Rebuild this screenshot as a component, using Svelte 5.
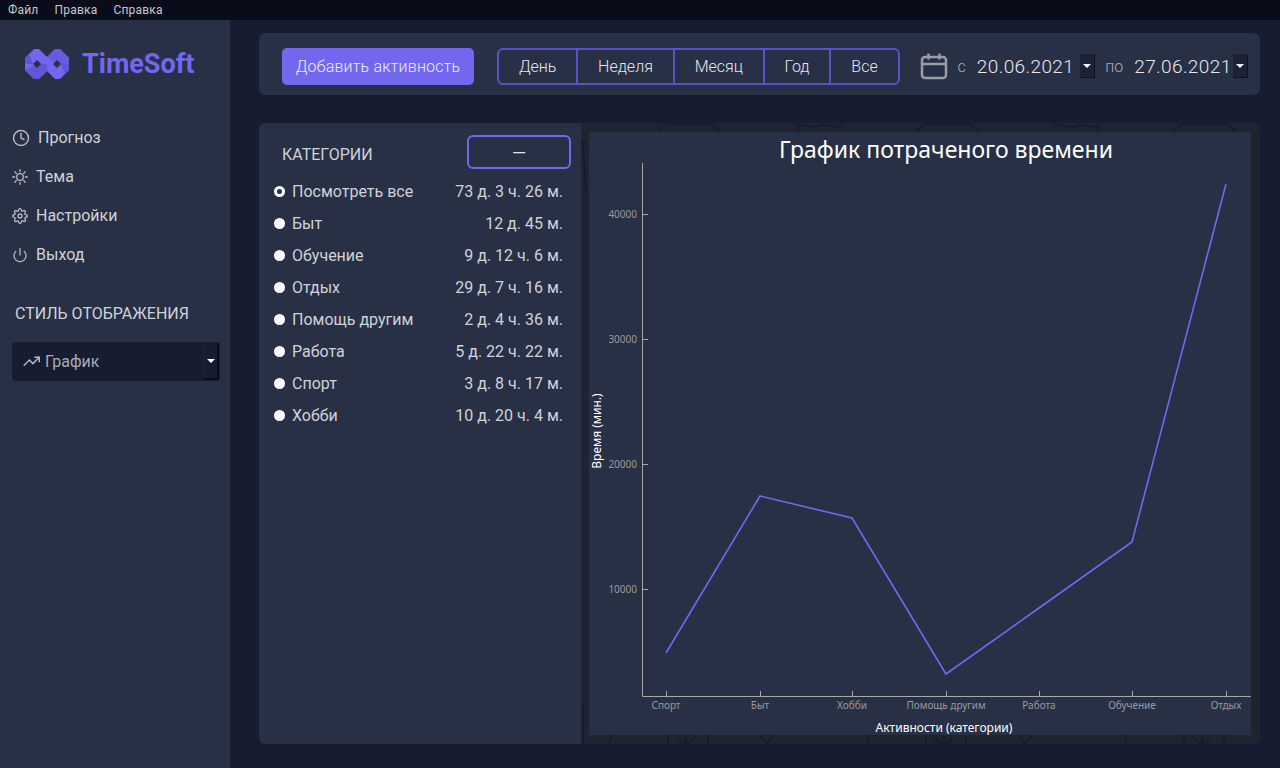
<script>
  const menus = ['Файл', 'Правка', 'Справка']
  const ranges = ['День', 'Неделя', 'Месяц', 'Год', 'Все']
  const categories = [
    { name: 'Посмотреть все', time: '73 д. 3 ч. 26 м.', active: true },
    { name: 'Быт', time: '12 д. 45 м.' },
    { name: 'Обучение', time: '9 д. 12 ч. 6 м.' },
    { name: 'Отдых', time: '29 д. 7 ч. 16 м.' },
    { name: 'Помощь другим', time: '2 д. 4 ч. 36 м.' },
    { name: 'Работа', time: '5 д. 22 ч. 22 м.' },
    { name: 'Спорт', time: '3 д. 8 ч. 17 м.' },
    { name: 'Хобби', time: '10 д. 20 ч. 4 м.' }
  ]
  // chart points, in px inside the plot svg
  const points = [
    { x: 77, y: 521, label: 'Спорт' },
    { x: 171, y: 364, label: 'Быт' },
    { x: 263, y: 386, label: 'Хобби' },
    { x: 357, y: 542, label: 'Помощь другим' },
    { x: 450, y: 476, label: 'Работа' },
    { x: 543, y: 410, label: 'Обучение' },
    { x: 637, y: 52, label: 'Отдых' }
  ]
  const yTicks = [
    { y: 82, label: '40000' },
    { y: 207, label: '30000' },
    { y: 332, label: '20000' },
    { y: 457, label: '10000' }
  ]
  const line = points.map((p) => `${p.x},${p.y}`).join(' ')
  // faint doodle wallpaper behind the chart repeats every 258px
  const repeats = [0, 258, 516]
</script>

<div class="app">
  <nav class="menubar">
    {#each menus as m}<span>{m}</span>{/each}
  </nav>

  <div class="body">
    <aside class="sidebar">
      <div class="logo">
        <svg width="46" height="32" viewBox="0 0 46 32">
          <path d="M1 10 L10 1 L15 1 L23 9 L31 1 L36 1 L45 10 L45 22 L36 31 L31 31 L23 23 L15 31 L10 31 L1 22 Z" fill="#7367f0" />
          <path d="M1 22 L10 31 L15 31 L23 23 L23 16 L13 16 Z" fill="#5f55d6" />
          <path d="M31 1 L36 1 L45 10 L45 16 L33 16 L23 9 Z" fill="#675cdf" />
          <path d="M1 10 L5 6 L9 16 L1 16 Z M45 22 L41 26 L37 16 L45 16 Z" fill="#5f55d6" />
          <path d="M13 12 L17 16 L13 20 L9 16 Z M33 12 L37 16 L33 20 L29 16 Z" fill="#283046" />
        </svg>
        <span>TimeSoft</span>
      </div>

      <ul class="nav">
        <li>
          <svg width="18" height="18" viewBox="0 0 24 24"><circle cx="12" cy="12" r="10" /><path d="M12 6v6l4 2" /></svg>
          Прогноз
        </li>
        <li>
          <svg width="16" height="16" viewBox="0 0 24 24"><circle cx="12" cy="12" r="5" /><path d="M12 1v3M12 20v3M4.200 4.200l2.100 2.100M17.700 17.700l2.100 2.100M1 12h3M20 12h3M4.200 19.800l2.100-2.100M17.700 6.300l2.100-2.100" /></svg>
          Тема
        </li>
        <li>
          <svg width="16" height="16" viewBox="0 0 24 24"><circle cx="12" cy="12" r="3" /><path d="M19.400 15a1.650 1.650 0 0 0 .33 1.820l.06.06a2 2 0 1 1-2.830 2.830l-.06-.06a1.650 1.650 0 0 0-2.820 1.170V21a2 2 0 1 1-4 0v-.09A1.650 1.650 0 0 0 7.200 19.800l-.06.06a2 2 0 1 1-2.830-2.830l.06-.06a1.650 1.650 0 0 0-1.170-2.820H3a2 2 0 1 1 0-4h.09A1.650 1.650 0 0 0 4.200 7.200l-.06-.06a2 2 0 1 1 2.830-2.830l.06.06a1.650 1.650 0 0 0 2.820-1.170V3a2 2 0 1 1 4 0v.09a1.650 1.650 0 0 0 2.820 1.170l.06-.06a2 2 0 1 1 2.830 2.830l-.06.06a1.650 1.650 0 0 0 1.170 2.820H21a2 2 0 1 1 0 4h-.09a1.650 1.650 0 0 0-1.510 1z" /></svg>
          Настройки
        </li>
        <li>
          <svg width="16" height="16" viewBox="0 0 24 24"><path d="M18.400 6.600a9 9 0 1 1-12.770 0M12 2v10" /></svg>
          Выход
        </li>
      </ul>

      <div class="style-title">СТИЛЬ ОТОБРАЖЕНИЯ</div>
      <div class="select">
        <svg width="17" height="17" viewBox="0 0 24 24"><path d="M1 18l8-8 5 5 9-9M16 6h7v7" /></svg>
        <span>График</span>
        <div class="caret-box"><i class="caret"></i></div>
      </div>
    </aside>

    <main class="main">
      <section class="toolbar">
        <button class="add">Добавить активность</button>
        <div class="ranges">
          {#each ranges as r}<button>{r}</button>{/each}
        </div>
        <div class="dates">
          <svg class="cal" width="28" height="28" viewBox="0 0 28 28"><rect x="2" y="5" width="24" height="21" rx="3" /><path d="M2 12h24M8.500 1.500v6M19.500 1.500v6" /></svg>
          <span class="word from">с</span>
          <span class="date">20.06.2021</span>
          <div class="spin"><i class="caret"></i></div>
          <span class="word">по</span>
          <span class="date">27.06.2021</span>
          <div class="spin tight"><i class="caret"></i></div>
        </div>
      </section>

      <section class="content">
        <div class="cats">
          <div class="cats-head">
            <span>КАТЕГОРИИ</span>
            <button class="collapse">—</button>
          </div>
          {#each categories as c}
            <div class="cat">
              <i class="dot" class:active={c.active}></i>
              <span class="name">{c.name}</span>
              <span class="time">{c.time}</span>
            </div>
          {/each}
        </div>

        <div class="chart-wrap">
          <svg class="doodles" width="679" height="621" viewBox="0 0 679 621">
            {#each repeats as dx}
              <g transform="translate({dx} 0)">
                <path d="M76 9 L86 1 H130 L140 9" />
                <path d="M217 0 V9 M259 0 V9 M217 3 Q222 1 227 3 T238 3 T249 3 T259 3" />
                <path d="M30 612 L28 621 M87 612 V621 M127 612 V621 M105 612 V621 M95 612 Q100 621 105 621 Q110 621 115 612 M179 612 L186 621 M193 612 L186 621" />
              </g>
            {/each}
            <path d="M0 20 H6 M2 20 L5 70 M2 580 V621" />
          </svg>
          <div class="chart">
            <svg width="662" height="603" viewBox="0 0 662 603">
              <text class="title" x="357" y="26" text-anchor="middle">График потраченого времени</text>
              <path class="axis" d="M53.500 31V564.500H662" />
              {#each yTicks as t}
                <path class="tick" d="M53 {t.y + 0.5}h6" />
                <text class="tick-label" x="48" y={t.y + 4} text-anchor="end">{t.label}</text>
              {/each}
              {#each points as p}
                <path class="tick" d="M{p.x + 0.5} 559v5" />
                <text class="tick-label" x={p.x} y="577" text-anchor="middle">{p.label}</text>
              {/each}
              <polyline class="plot" points={line} />
              <text class="axis-label" x="355" y="600" text-anchor="middle">Активности (категории)</text>
              <text class="axis-label" transform="translate(12 299) rotate(-90)" text-anchor="middle">Время (мин.)</text>
            </svg>
          </div>
        </div>
      </section>
    </main>
  </div>
</div>

<style>
  :global(body) {
    margin: 0;
    background: #161d31;
  }
  .app {
    width: 1280px;
    height: 768px;
    overflow: hidden;
    font-family: Roboto, sans-serif;
    color: #d0d2d6;
  }
  svg {
    display: block;
    flex: none;
  }
  button {
    font-family: inherit;
    background: none;
    border: 0;
    color: inherit;
    padding: 0;
  }
  .menubar {
    height: 20px;
    padding-left: 8px;
    display: flex;
    align-items: center;
    gap: 16px;
    background: #0a0c1a;
    font-size: 12px;
    letter-spacing: 0.2px;
    color: #c6c8d0;
  }
  .body {
    display: flex;
    height: 748px;
  }
  .sidebar {
    width: 230px;
    flex: none;
    background: #283046;
  }
  .logo {
    display: flex;
    align-items: center;
    gap: 12px;
    padding: 26px 0 0 24px;
    height: 36px;
    font-size: 27px;
    font-weight: 700;
    color: #7367f0;
  }
  .nav {
    list-style: none;
    margin: 36px 0 0;
    padding: 0 0 0 12px;
    font-size: 16px;
  }
  .nav li {
    height: 39px;
    display: flex;
    align-items: center;
    gap: 8px;
  }
  .nav svg {
    fill: none;
    stroke: #b4b7bd;
    stroke-width: 2;
    stroke-linecap: round;
    stroke-linejoin: round;
  }
  .style-title {
    margin: 30px 0 0 15px;
    font-size: 16px;
    line-height: 19px;
  }
  .select {
    margin: 19px 0 0 12px;
    width: 208px;
    height: 39px;
    border-radius: 4px;
    background: #161d31;
    display: flex;
    align-items: center;
    position: relative;
    font-size: 16px;
    color: #a8abb3;
  }
  .select svg {
    margin: 0 5px 0 11px;
    fill: none;
    stroke: #b4b7bd;
    stroke-width: 2;
  }
  .caret-box {
    position: absolute;
    right: 1px;
    top: 1px;
    bottom: 1px;
    width: 15px;
    display: flex;
    align-items: center;
    justify-content: center;
    border-left: 1px solid #1a2138;
    border-right: 2px solid #0a0c1a;
    border-bottom: 2px solid #0a0c1a;
    box-sizing: border-box;
  }
  .caret {
    display: block;
    width: 0;
    height: 0;
    border: 4px solid transparent;
    border-top-color: #fff;
    border-bottom: 0;
  }
  .main {
    flex: 1;
    padding: 13px 20px 0 29px;
    min-width: 0;
  }
  .toolbar {
    height: 62px;
    box-sizing: border-box;
    border-radius: 6px;
    background: #283046;
    display: flex;
    align-items: center;
    padding: 4px 0 0 23px;
  }
  .add {
    flex: none;
    width: 192px;
    height: 37px;
    border-radius: 5px;
    background: #7367f0;
    color: #f0eefc;
    font-size: 16px;
    font-weight: 300;
    letter-spacing: 0.2px;
  }
  .ranges {
    flex: none;
    margin-left: 23px;
    height: 37px;
    box-sizing: border-box;
    display: flex;
    border: 2px solid #5a50c8;
    border-radius: 6px;
  }
  .ranges button {
    font-size: 16px;
    font-weight: 300;
    padding: 0 19.900px;
    color: #e6e7eb;
    border-right: 2px solid #5a50c8;
  }
  .ranges button:last-child {
    border-right: 0;
  }
  .dates {
    margin-left: 20px;
    display: flex;
    align-items: center;
  }
  .cal {
    fill: none;
    stroke: #9a9da6;
    stroke-width: 2.500;
  }
  .word {
    font-size: 16px;
    font-weight: 300;
    color: #a8abb3;
    margin: 0 11px 0 10px;
  }
  .date {
    font-size: 19px;
    font-weight: 300;
    letter-spacing: 0.4px;
    color: #e6e7eb;
  }
  .spin {
    margin: 0 0 0 6px;
    width: 15px;
    height: 24px;
    box-sizing: border-box;
    background: #1b2236;
    border-right: 1px solid #0e1120;
    border-bottom: 1px solid #0e1120;
    display: flex;
    align-items: center;
    justify-content: center;
  }
  .spin.tight {
    margin-left: 1px;
  }
  .content {
    margin-top: 28px;
    height: 621px;
    display: flex;
    border-radius: 6px;
    overflow: hidden;
  }
  .cats {
    width: 322px;
    flex: none;
    background: #283046;
    box-sizing: border-box;
    padding: 12px 10px 0 15px;
  }
  .cats-head {
    height: 34px;
    margin-bottom: 6px;
    display: flex;
    justify-content: space-between;
    align-items: center;
    padding-left: 8px;
    font-size: 16px;
  }
  .cats-head span {
    padding-top: 4px;
  }
  .collapse {
    width: 104px;
    height: 34px;
    box-sizing: border-box;
    border: 2px solid #7367f0;
    border-radius: 6px;
    color: #e4e5e9;
    font-size: 18px;
  }
  .cat {
    height: 32px;
    display: flex;
    align-items: center;
    font-size: 16px;
  }
  .dot {
    width: 11px;
    height: 11px;
    border-radius: 50%;
    background: #fff;
    margin-right: 7px;
    box-sizing: border-box;
  }
  .dot.active {
    background: transparent;
    border: 3px solid #fff;
  }
  .time {
    margin-left: auto;
    margin-right: 8px;
  }
  .chart-wrap {
    flex: 1;
    position: relative;
    background: #1f2430;
    padding: 9px 9px 9px 8px;
  }
  .doodles {
    position: absolute;
    inset: 0;
    fill: none;
    stroke: #171b28;
    stroke-width: 1.500;
  }
  .chart {
    position: relative;
    width: 662px;
    height: 603px;
    background: #283046;
  }
  .title {
    font-family: "Noto Sans", sans-serif;
    font-size: 23px;
    fill: #fff;
  }
  .axis {
    fill: none;
    stroke: #a8a8a8;
    stroke-width: 1;
  }
  .tick {
    stroke: #a8a8a8;
    stroke-width: 1;
  }
  .tick-label {
    font-family: "Noto Sans", sans-serif;
    font-size: 10px;
    fill: #9a9a9a;
  }
  .axis-label {
    font-family: "Noto Sans", sans-serif;
    font-size: 12px;
    fill: #fff;
  }
  .plot {
    fill: none;
    stroke: #7367f0;
    stroke-width: 1.600;
  }
</style>
